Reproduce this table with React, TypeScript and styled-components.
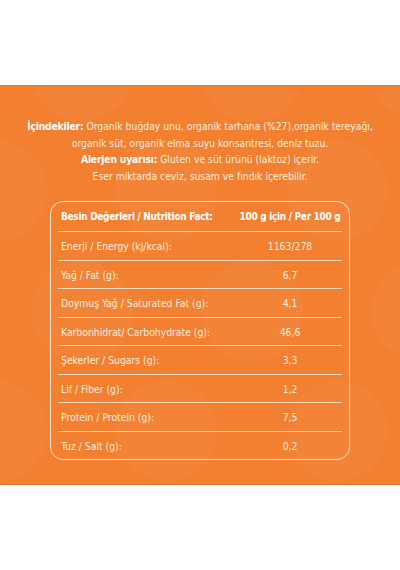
import styled, { createGlobalStyle } from "styled-components";

const GlobalStyle = createGlobalStyle`
  html, body {
    margin: 0;
    padding: 0;
    background: #ffffff;
  }
  body {
    font-family: "DejaVu Sans Condensed", "Liberation Sans", sans-serif;
  }
`;

interface NutritionRow {
  label: string;
  value: string;
}

const rows: NutritionRow[] = [
  { label: "Enerji / Energy (kj/kcal):", value: "1163/278" },
  { label: "Yağ / Fat (g):", value: "6,7" },
  { label: "Doymuş Yağ / Saturated Fat (g):", value: "4,1" },
  { label: "Karbonhidrat/ Carbohydrate (g):", value: "46,6" },
  { label: "Şekerler / Sugars (g):", value: "3,3" },
  { label: "Lif / Fiber (g):", value: "1,2" },
  { label: "Protein / Protein (g):", value: "7,5" },
  { label: "Tuz / Salt (g):", value: "0,2" },
];

const Page = styled.div`
  width: 400px;
  height: 570px;
  display: flex;
  align-items: center;
`;

// faint circle pattern behind the label
const Panel = styled.section`
  width: 400px;
  height: 400px;
  box-sizing: border-box;
  border-top: 1px solid #dc742f;
  border-bottom: 1px solid #dc742f;
  background-color: #f37f31;
  background-image: radial-gradient(
      circle at center,
      rgba(255, 255, 255, 0.028) 50px,
      transparent 51px
    ),
    radial-gradient(
      circle at center,
      rgba(255, 255, 255, 0.028) 50px,
      transparent 51px
    );
  background-size: 170px 240px, 170px 240px;
  background-position: -88px -15px, -3px 105px;
  display: flex;
  flex-direction: column;
  align-items: center;
  padding-top: 32px;
  color: #fdeedf;
`;

const Ingredients = styled.p`
  margin: 0;
  font-size: 10.3px;
  line-height: 16.7px;
  text-align: center;
`;

const Line = styled.span`
  display: block;
  white-space: nowrap;
`;

const Strong = styled.b`
  font-weight: 700;
  color: #ffffff;
  letter-spacing: -0.2px;
`;

const Table = styled.div`
  margin-top: 16px;
  width: 300px;
  box-sizing: border-box;
  border: 1.5px solid #fde4cc;
  border-radius: 13px;
  padding: 0 7px;
`;

const Row = styled.div<{ $header?: boolean }>`
  display: grid;
  grid-template-columns: 1fr 104px;
  align-items: center;
  box-sizing: border-box;
  height: ${(p) => (p.$header ? "29.5px" : "28.5px")};
  border-top: ${(p) => (p.$header ? "none" : "1.5px solid #fbdcc0")};
  font-size: ${(p) => (p.$header ? "10px" : "10.3px")};
  letter-spacing: ${(p) => (p.$header ? "-0.3px" : "0")};
  font-weight: ${(p) => (p.$header ? 700 : 400)};
  color: ${(p) => (p.$header ? "#ffffff" : "#fdeedf")};
`;

const Label = styled.span`
  padding-left: 3px;
  white-space: nowrap;
`;

const Value = styled.span`
  text-align: center;
  white-space: nowrap;
`;

export default function App() {
  return (
    <>
      <GlobalStyle />
      <Page>
        <Panel>
          <Ingredients>
            <Line>
              <Strong>İçindekiler:</Strong> Organik buğday unu, organik tarhana
              (%27),organik tereyağı,
            </Line>
            <Line>organik süt, organik elma suyu konsantresi, deniz tuzu.</Line>
            <Line>
              <Strong>Alerjen uyarısı:</Strong> Gluten ve süt ürünü (laktoz)
              içerir.
            </Line>
            <Line>Eser miktarda ceviz, susam ve fındık içerebilir.</Line>
          </Ingredients>
          <Table>
            <Row $header>
              <Label>Besin Değerleri / Nutrition Fact:</Label>
              <Value>100 g için / Per 100 g</Value>
            </Row>
            {rows.map((r) => (
              <Row key={r.label}>
                <Label>{r.label}</Label>
                <Value>{r.value}</Value>
              </Row>
            ))}
          </Table>
        </Panel>
      </Page>
    </>
  );
}
